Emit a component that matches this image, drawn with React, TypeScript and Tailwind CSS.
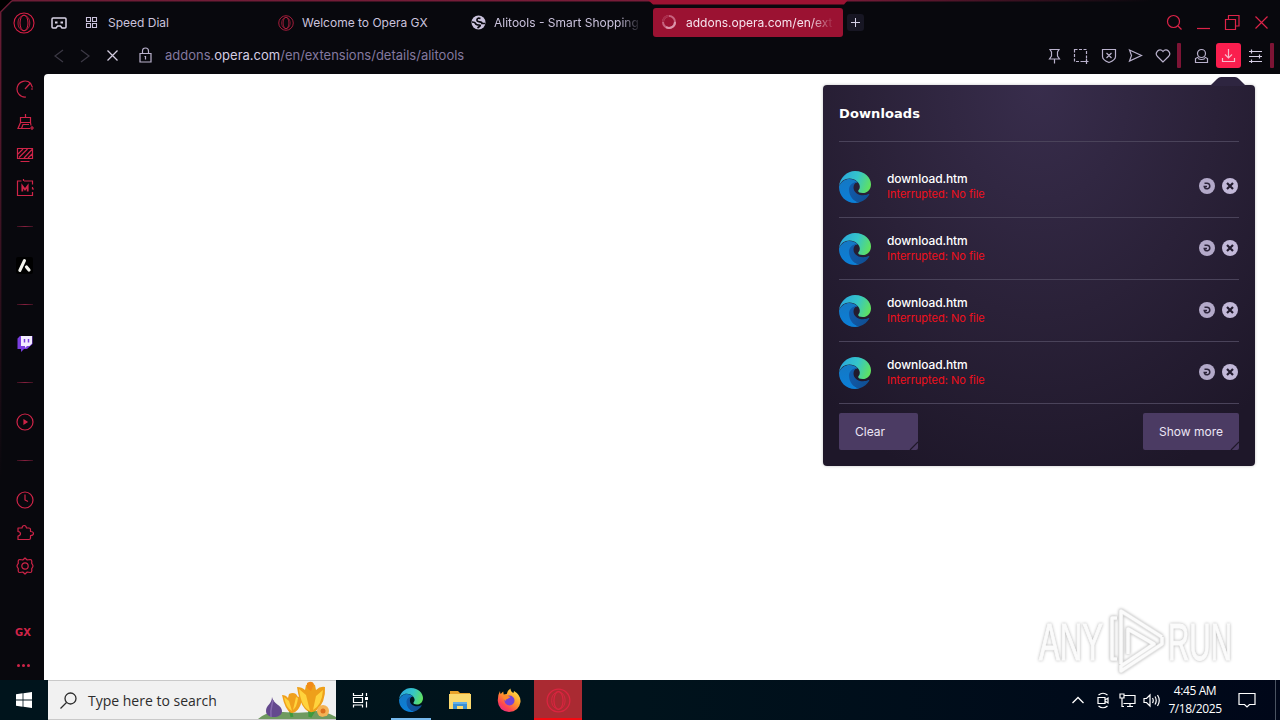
import type { ReactNode } from 'react';

type IconProps = {
  w: number;
  h?: number;
  className?: string;
  sw?: number;
  children: ReactNode;
};

function Icon({ w, h = w, className = '', sw = 1.2, children }: IconProps) {
  return (
    <svg
      width={w}
      height={h}
      viewBox={`0 0 ${w} ${h}`}
      fill="none"
      stroke="currentColor"
      strokeWidth={sw}
      className={`shrink-0 ${className}`}
    >
      {children}
    </svg>
  );
}

function OperaLogo({ size, className = '' }: { size: number; className?: string }) {
  return (
    <svg width={size} height={size} viewBox="0 0 22 22" fill="none" stroke="currentColor" className={`shrink-0 ${className}`}>
      <circle cx="11" cy="11" r="10" strokeWidth="1.1" />
      <ellipse cx="11" cy="11" rx="4" ry="7.8" strokeWidth="1" />
      <path d="M8.500 4.200C10.500 1.700 16.800 4 16.800 11S10.500 20.300 8.500 17.800M8.500 4.200C6 5.500 5 8 5 11s1 5.500 3.500 6.800" strokeWidth=".8" />
    </svg>
  );
}

function EdgeLogo({ size }: { size: number }) {
  const id = `edge${size}`;
  return (
    <svg width={size} height={size} viewBox="0 0 32 32" className="shrink-0">
      <defs>
        <linearGradient id={`${id}a`} x1="2" y1="6" x2="31" y2="17" gradientUnits="userSpaceOnUse">
          <stop offset="0" stopColor="#2aa9dc" />
          <stop offset=".5" stopColor="#35c5c9" />
          <stop offset="1" stopColor="#62e35a" />
        </linearGradient>
        <linearGradient id={`${id}b`} x1="8" y1="8" x2="10" y2="32" gradientUnits="userSpaceOnUse">
          <stop offset="0" stopColor="#1478c4" />
          <stop offset="1" stopColor="#0b7fd8" />
        </linearGradient>
        <linearGradient id={`${id}c`} x1="10" y1="18" x2="30" y2="26" gradientUnits="userSpaceOnUse">
          <stop offset="0" stopColor="#1259a8" />
          <stop offset="1" stopColor="#0f4f93" />
        </linearGradient>
      </defs>
      <path fill={`url(#${id}b)`} d="M0 15.500C2 10.500 6 8 10.500 8c3.500 0 6.500 1.500 8 3.500C13 12 11 15 11 18.500 11 25 15 30 20.500 31.300 19 31.800 17.500 32 16 32 7 32 0 25 0 16Z" />
      <path fill={`url(#${id}c)`} d="M17.500 11C12.500 11.500 10 15 10 18.500c0 7 5 12.500 10.500 12.700 4.500-1.200 8-4.200 9.700-7.400.4-.7-.2-1-.8-.7-1.400.8-3.200 1.200-5.200 1.200-6 0-9.700-3.800-9.700-7.800 0-2.500 1.200-4.500 3.500-5.500Z" />
      <path fill={`url(#${id}a)`} d="M0 15.500C.8 6.500 8 0 16 0c10 0 16 7 16 13.200 0 5.600-4 8.800-8.200 8.800-3.200 0-4.600-1-4.600-2 0-.9 1.600-1.400 1.600-4.200C20.800 12 16.500 7.600 10.500 7.600 5.500 7.600 1.500 10.500 0 15.500Z" />
    </svg>
  );
}

function Tab({ icon, label, className, active = false }: { icon: ReactNode; label: string; className: string; active?: boolean }) {
  return (
    <div className={`flex h-[29px] shrink-0 items-center rounded-[3px] pl-2 ${active ? 'bg-[#9b1232] text-[#f6e4ee]' : 'text-[#cbc3dd]'} ${className}`}>
      {icon}
      <span className="ml-2 flex-1 overflow-hidden whitespace-nowrap pt-px">{label}</span>
    </div>
  );
}

function TopBar() {
  return (
    <div className="flex h-[45px] items-center text-[12px]">
      <OperaLogo size={22} className="ml-[13px] text-[#d81f45]" />
      <Icon w={17} h={14} className="ml-[16px] mr-[9px] text-[#d9d4e6]" sw={1.5}>
        <path d="M2 2h12q1 0 1 1v8q0 1-1 1h-3L9.500 10h-3L5 12H2q-1 0-1-1V3q0-1 1-1z" />
        <path d="M4 6.500h2.500M9.500 6.500H12" strokeWidth="2.200" />
      </Icon>
      <Tab
        className="w-[193px]"
        label="Speed Dial"
        icon={
          <Icon w={13} className="mr-[2px]" sw={1.1}>
            <path d="M1.500 1.500h4v4h-4zM7.500 1.500h4v4h-4zM1.500 7.500h4v4h-4zM7.500 7.500h4v4h-4z" />
          </Icon>
        }
      />
      <Tab className="w-[193px]" label="Welcome to Opera GX" icon={<OperaLogo size={16} className="text-[#c92246]" />} />
      <Tab
        className="mr-[10px] w-[180px] [&>span]:[mask-image:linear-gradient(to_right,black_84%,transparent_99%)]"
        label="Alitools - Smart Shopping"
        icon={
          <svg width="15" height="15" viewBox="0 0 15 15" className="shrink-0">
            <circle cx="7.500" cy="7.500" r="7" fill="#cbc3dd" />
            <path d="M9.500 3.500q-3-1-3.500 1t2.500 2.300 2.500 1.700h3M1 7q3 0 3.500 1.500T8 10t-1.500 3" fill="none" stroke="#08080d" strokeWidth="1.700" />
          </svg>
        }
      />
      <Tab
        active
        className="w-[190px] pr-[10px] [&>span]:[mask-image:linear-gradient(to_right,black_84%,transparent_101%)]"
        label="addons.opera.com/en/ext"
        icon={
          <Icon w={17} sw={2}>
            <circle cx="8" cy="8" r="6" stroke="#c7647f" />
            <path d="M8 2a6 6 0 0 0-6 6" stroke="#a92a49" />
            <path d="M5 13.200A6 6 0 0 0 14 8" stroke="#dc95aa" />
          </Icon>
        }
      />
      <div className="ml-[4px] flex h-[17px] w-[17px] items-center justify-center rounded-[3px] bg-[#171623] text-[#d5d1e6]">
        <Icon w={11} sw={1}>
          <path d="M5.500 1v9M1 5.500h9" />
        </Icon>
      </div>
      <div className="ml-auto flex items-center text-[#dc2348]">
        <Icon w={17}>
          <circle cx="7.500" cy="7.500" r="6" />
          <path d="m12 12 3.500 3.500" />
        </Icon>
        <Icon w={15} h={17} className="ml-[13px]">
          <path d="M1 14.500h13" />
        </Icon>
        <Icon w={17} className="ml-[13px]">
          <path d="M1.500 5.500h10v10h-10zM4.500 5.500v-4h10.500v10.500h-3.500" />
        </Icon>
        <Icon w={15} className="ml-[13px] mr-[11px]">
          <path d="m1.500 1.500 12 12M13.500 1.500l-12 12" />
        </Icon>
      </div>
    </div>
  );
}

function AddressBar() {
  return (
    <div className="mb-2 flex h-[21px] items-center text-[#b9b1cc]">
      <Icon w={11} h={14} className="ml-[53px] text-[#3c3945]">
        <path d="M10 1 2 7l8 6" />
      </Icon>
      <Icon w={11} h={14} className="ml-[16px] text-[#3c3945]">
        <path d="m1 1 8 6-8 6" />
      </Icon>
      <Icon w={13} className="ml-[15px] text-[#d3ccdf]" sw={1.3}>
        <path d="m1.500 1.500 10 10M11.500 1.500l-10 10" />
      </Icon>
      <Icon w={13} h={16} className="ml-[20px] mb-px">
        <path d="M1 6.500h11v8.500H1zM3.500 6.500V4q0-3 3-3t3 3v2.500M5.500 9.500h1v3" />
      </Icon>
      <span className="ml-[13px] whitespace-nowrap pt-px text-[13px] text-[#83799f]">
        addons.<span className="text-[#d4cde3]">opera.com</span>/en/extensions/details/alitools
      </span>

      <div className="ml-auto flex items-center">
        <Icon w={13} h={16}>
          <path d="M2 1.500h9L9.500 4v4l2 3h-10l2-3V4zM6.500 11v4.500" />
        </Icon>
        <Icon w={16} className="ml-[12px]">
          <path d="M1.500 1.500h12v12h-12z" strokeDasharray="3 1.500" />
          <path d="M10 13.500h5.500M13.500 11v5" />
        </Icon>
        <Icon w={16} className="ml-[12px]">
          <path d="M1.500 1.500h13v7q0 3.500-6.500 6-6.500-2.500-6.500-6zM5.500 5l5 5M10.500 5l-5 5" />
        </Icon>
        <Icon w={15} className="ml-[11px]">
          <path d="m1.500 2 12 5.500-12 5.500 2-5.500z" />
        </Icon>
        <Icon w={16} className="ml-[12px]">
          <path d="M8 14 2.500 8.500C-1 5 4.500-1 8 3.500c3.500-4.500 9 1.500 5.500 5z" />
        </Icon>
        <span className="ml-[6px] h-[25px] w-1 rounded-[1px] bg-[#7d1435]" />
        <Icon w={15} h={16} className="ml-[13px]">
          <circle cx="7.500" cy="5.500" r="4" />
          <path d="M4.500 9 1.500 10.500v4h12v-4l-3-1.500M4 10.500q3.500 2 7 0" />
        </Icon>
        <span className="ml-[7px] flex h-[25px] w-[25px] items-center justify-center rounded-[3px] bg-[#fa1e4e] text-[#f7b9ca]">
          <Icon w={15}>
            <path d="M7.500 1v8.500M4 6.500l3.500 3.500L11 6.500M1.500 10v3.500h12V10" />
          </Icon>
        </span>
        <Icon w={15} h={14} className="ml-[7px] text-[#d4cde3]">
          <path d="M1 2.500h13M1 7.500h13M1 12.500h13M3.500.5v4M11.500 5.500v4M3.500 10.500v3.500" />
        </Icon>
        <span className="ml-[7px] mr-[6px] h-[25px] w-1 rounded-[1px] bg-[#7d1435]" />
      </div>
    </div>
  );
}

function Dash() {
  return (
    <div className="flex h-[45px] w-full shrink-0 items-center justify-center">
      <span className="h-[1.5px] w-4 bg-linear-to-r from-[#3d1020] via-[#87203f] to-[#3d1020]" />
    </div>
  );
}

function Slot({ children }: { children: ReactNode }) {
  return <div className="flex h-[33px] w-full shrink-0 items-center justify-center">{children}</div>;
}

function Sidebar() {
  return (
    <div className="-mt-0.5 flex w-11 shrink-0 flex-col items-center pl-[5px] text-[#cf2448]">
      <Slot>
        <Icon w={18}>
          <path d="M10 17A8 8 0 1 1 14.500 3.200M9 9l5-5.500M14.500 3.200l2 4.300M15 9h2" />
        </Icon>
      </Slot>
      <Slot>
        <Icon w={18}>
          <path d="M4.500 4.500h10v5h-10zM9.500 1v3.500M4.500 9.500 2 15.500h12M14.500 9.500l.5 3M5.500 15.500l1.500-4h6M16 13v4M14 15h4" />
        </Icon>
      </Slot>
      <Slot>
        <Icon w={18}>
          <path d="M1.500 2.500h15v10h-15zM4.500 15.500h9M2 8l5-5M3 11.500 11.500 3M8 12l8-8.500M12 12l4-4" />
        </Icon>
      </Slot>
      <Slot>
        <Icon w={18}>
          <path d="M16.500 5.500V2H8M5.500 2h-4v14.500h15V13M16.500 8v2.500M7.500 0v2M16 10h2" />
          <path d="M6.300 12.500V7L9 10.500 11.700 7v5.500" strokeWidth="1.800" />
        </Icon>
      </Slot>
      <Dash />
      <Slot>
        <svg width="17" height="17" viewBox="0 0 17 17">
          <rect width="17" height="17" rx="2" fill="#000" />
          <path d="M8.500 3.500 3.800 13.500" stroke="#f4f4ee" strokeWidth="3" strokeLinecap="round" />
          <path d="M10.500 10l2.500 3" stroke="#f4f4ee" strokeWidth="3.200" strokeLinecap="round" />
        </svg>
      </Slot>
      <Dash />
      <Slot>
        <svg width="16" height="17" viewBox="0 0 16 17">
          <path d="M3 1 .5 3.500V14H4v3l3-3h3l5.500-5V1z" fill="#7a3fe0" />
          <path d="M4 1h11v7.500L12.500 11H10l-2 2v-2H4z" fill="#f3ecff" />
          <path d="M7.500 4v3.500M11.500 4v3.500" stroke="#7a3fe0" strokeWidth="1.500" />
        </svg>
      </Slot>
      <Dash />
      <Slot>
        <Icon w={18}>
          <circle cx="9" cy="9" r="8" />
          <path d="m8 7 3 2-3 2z" fill="currentColor" />
        </Icon>
      </Slot>
      <Dash />
      <Slot>
        <Icon w={18}>
          <circle cx="9" cy="9" r="8" />
          <path d="M9 3.500V9l3 1.500" />
        </Icon>
      </Slot>
      <Slot>
        <Icon w={18}>
          <path
            strokeLinejoin="round"
            d="M2 4h4q.3-2.500 2.200-2.500T10.500 4H13q1.500 0 1.500 1.500V7.500q3 0 3 2t-3 2.200V14q0 1.500-1.500 1.500H2V12q2.500-.5 2.500-2.300T2 7.500z"
          />
        </Icon>
      </Slot>
      <Slot>
        <Icon w={18}>
          <path
            strokeLinejoin="round"
            d="M9 1l2.200 2 3-.5q1.500 0 1.600 1.500l-.1 2.300Q17 8 17 9t-1.300 2.700l.1 2.300q-.1 1.500-1.600 1.500l-3-.5L9 17l-2.200-2-3 .5Q2.300 15.500 2.200 14l.1-2.300Q1 10 1 9t1.300-2.700L2.200 4Q2.300 2.500 3.800 2.500l3 .5z"
          />
          <circle cx="9" cy="9" r="3.200" />
        </Icon>
      </Slot>
      <div className="mt-[34px] w-full shrink-0">
        <Slot>
          <span className="-ml-[3px] font-['DejaVu_Sans'] text-[10px] font-bold">GX</span>
        </Slot>
        <Slot>
          <span className="-ml-[2px] flex gap-[2px]">
            <span className="size-[3px] rounded-full bg-[#cf2448]" />
            <span className="size-[3px] rounded-full bg-[#cf2448]" />
            <span className="size-[3px] rounded-full bg-[#cf2448]" />
          </span>
        </Slot>
      </div>
    </div>
  );
}

function DownloadRow() {
  return (
    <div className="flex h-[62px] items-center border-b border-[#4a435a]">
      <EdgeLogo size={32} />
      <div className="ml-4 flex-1 pb-[1px]">
        <div className="text-[12px] leading-4 font-medium tracking-[-0.1px] text-white">download.htm</div>
        <div className="text-[11px] leading-[15px] text-[#f0101c]">Interrupted: No file</div>
      </div>
      <svg width="16" height="16" viewBox="0 0 16 16" className="mb-[2px] mr-[7px]">
        <circle cx="8" cy="8" r="8" fill="#b3a9c9" />
        <path d="M5.500 5.200H8a2.800 2.800 0 1 1-2.600 3.900M4.500 8.500H8" fill="none" stroke="#2c243a" strokeWidth="1.500" />
      </svg>
      <svg width="16" height="16" viewBox="0 0 16 16" className="mb-[2px] mr-[1px]">
        <circle cx="8" cy="8" r="8" fill="#c2b8d8" />
        <path d="m5 5 6 6M11 5l-6 6" stroke="#221b2e" strokeWidth="2.200" />
      </svg>
    </div>
  );
}

function PanelButton({ label }: { label: string }) {
  return (
    <button className="relative h-[37px] whitespace-nowrap rounded-[2px] bg-[#4b3b63] px-4 pt-px text-left text-[12px] text-[#ece6f5]">
      {label}
      <svg width="9" height="9" viewBox="0 0 9 9" className="absolute bottom-0 right-0">
        <path d="M9 1 1 9" stroke="#1f1829" strokeWidth="1.200" />
      </svg>
    </button>
  );
}

function DownloadsPanel() {
  return (
    <div className="absolute right-[25px] top-[85px] h-[381px] w-[432px] rounded-[4px] bg-[radial-gradient(ellipse_75%_110%_at_50%_0%,#382d4c_0%,#2a2138_55%,#1e1729_100%)] px-4 shadow-[0_0_3px_rgba(0,0,0,0.25)]">
      <svg width="36" height="9" viewBox="0 0 36 9" className="absolute -top-2 right-[9px]">
        <path d="M0 9 7 2q2-2 4-2h14q2 0 4 2l7 7z" fill="#2e2540" />
      </svg>
      <div className="flex h-[57px] items-center border-b border-[#4a435a] pt-[2px]">
        <h2 className="font-['DejaVu_Sans'] text-[13px] font-bold tracking-[0.1px] text-white">Downloads</h2>
      </div>
      <div className="mt-[14px]">
        {[0, 1, 2, 3].map((i) => (
          <DownloadRow key={i} />
        ))}
      </div>
      <div className="mt-[9px] flex justify-between [&>button:first-child]:w-[79px] [&>button:last-child]:w-24">
        <PanelButton label="Clear" />
        <PanelButton label="Show more" />
      </div>
    </div>
  );
}

function Watermark() {
  return (
    <svg width="220" height="70" viewBox="0 0 220 70" className="absolute left-[1030px] top-[606px] [filter:drop-shadow(0_0_1.5px_rgba(0,0,0,0.3))]">
      <g fill="#fbfbfb" stroke="#fbfbfb" strokeWidth="1" fontFamily="Liberation Sans Narrow, Liberation Sans" fontSize="52">
        <text x="9" y="54" textLength="64" lengthAdjust="spacingAndGlyphs">ANY</text>
        <text x="138" y="54" textLength="64" lengthAdjust="spacingAndGlyphs">RUN</text>
      </g>
      <g fill="none" strokeLinejoin="round">
        <path d="M87 12h-5v41h5M91 58V5l41 26M98 48V23l26 15-33 22v5l41-27v-7" stroke="#e4e4e4" strokeWidth="4.500" />
        <path d="M87 12h-5v41h5M91 58V5l41 26M98 48V23l26 15-33 22v5l41-27v-7" stroke="#fbfbfb" strokeWidth="3.200" />
      </g>
    </svg>
  );
}

function SearchArt() {
  return (
    <svg width="78" height="39" viewBox="0 0 78 39" className="ml-auto shrink-0 self-end">
      <path d="M0 39Q10 30 25 32q20 2 33-1 10 0 20 6v2z" fill="#6f9a60" />
      <path d="M52 37 51 20M34 37l-3-12M52 37l7-11" stroke="#3e9a3c" strokeWidth="3" fill="none" />
      <path d="M14 17c1 7 10 8 10 14 0 8-16 8-16 0 0-6 6-7 6-14Z" fill="#64498e" />
      <path d="M15 20c-1 6-3 9-2 17" stroke="#8468ad" strokeWidth="1.500" fill="none" />
      <path d="M24 15q4 0 6 3l1-4q4-2 7 0l2 3 2-1q3 6-1 12-3 5-8 5-6-3-9-18Z" fill="#f0a01c" />
      <path d="m26 17 5 4 3 10q-6-3-8-14ZM38 17l2 1q-1 9-5 12z" fill="#ffd33d" />
      <path d="M39 7q5 0 8 3l1-5q5-3 9 0l1 5q4-4 9-3 1 15-9 24-7 3-11-2-6-7-8-22Z" fill="#eea01a" />
      <path d="m41 9 7 6 4 16q-9-4-11-22ZM65 10l-7 6-3 14q9-5 10-20Z" fill="#ffd33d" />
      <path d="M49 3q5-3 7 1l-3 7-4-3z" fill="#f18b18" />
      <circle cx="65" cy="31" r="6" fill="#f4b255" />
      <circle cx="65" cy="31" r="2.500" fill="#dc701e" />
      <path d="M60 39q8-5 17-2v2z" fill="#6f9a60" />
    </svg>
  );
}

function Taskbar() {
  return (
    <div className="flex h-10 items-center bg-linear-to-r from-[#00141c] via-[#00131c] to-[#000719] font-['Open_Sans','Noto_Sans',sans-serif] text-white">
      <div className="flex w-12 justify-center">
        <svg width="16" height="16" viewBox="0 0 16 16" fill="#fff">
          <path d="M0 2.200 6.600 1.300v6.300H0zM7.400 1.200 16 0v7.600H7.400zM0 8.400h6.600v6.300L0 13.800zM7.400 8.400H16V16l-8.600-1.200z" />
        </svg>
      </div>
      <div className="flex h-10 w-72 items-center border-y border-[#c9c9c9] bg-[#f1f1f1] pl-3 text-[#2c2c2c]">
        <Icon w={17} sw={1.3}>
          <circle cx="10.500" cy="6.500" r="5.500" />
          <path d="M6.500 10.500.5 16.500" />
        </Icon>
        <span className="ml-[11px] whitespace-nowrap text-[14px]">Type here to search</span>
        <SearchArt />
      </div>
      <div className="flex w-12 justify-center">
        <Icon w={17} h={16} sw={1.2}>
          <path d="M1.500 1v2.500h9V1M1.500 15.500V13h9v2.500M1.500 5.500h9v5h-9zM14.500 1v3M14.500 9.500v6" />
          <path d="M13 5h3v3h-3z" fill="currentColor" stroke="none" />
        </Icon>
      </div>
      <div className="relative ml-[3px] flex h-10 w-[48px] items-center justify-center">
        <EdgeLogo size={24} />
        <span className="absolute bottom-0 h-0.5 w-10 bg-[#76b9ed]" />
      </div>
      <div className="flex w-[50px] justify-center">
        <svg width="22" height="19" viewBox="0 0 22 19">
          <path d="M1 0h8l2 2h10v5H1z" fill="#e9a32a" />
          <path d="M0 3h22v15H0z" fill="#fbd96e" />
          <path d="M4 18v-7h14v7h-4v-3H8v3z" fill="#3b8fd2" />
          <path d="M4 11h14v2H4z" fill="#63aee6" />
        </svg>
      </div>
      <div className="flex w-[49px] justify-center pr-[2px]">
        <svg width="24" height="24" viewBox="0 0 24 24">
          <defs>
            <linearGradient id="fox" x1="20" y1="2" x2="5" y2="22" gradientUnits="userSpaceOnUse">
              <stop offset="0" stopColor="#ffe04a" />
              <stop offset=".45" stopColor="#ff9a2b" />
              <stop offset=".8" stopColor="#ff4550" />
              <stop offset="1" stopColor="#e8307f" />
            </linearGradient>
          </defs>
          <path d="M3 3q0 2 .7 3l2.500-2.500.5 3 3-.5Q10 3 13.500.5q0 3 3 4.500L17 3q7 4 6.500 11-1.500 9.500-11.500 10Q1.500 23 .8 13 .6 7 3 3Z" fill="url(#fox)" />
          <circle cx="12.500" cy="12.500" r="5" fill="#7542d8" />
          <path d="M5 8q4-2 6 0l2.500 1-3 2q-2 0-2 2-2-2-3.500-5Z" fill="#ff8a2a" />
        </svg>
      </div>
      <div className="flex h-10 w-12 items-center justify-center border-b-2 border-[#f40a12] bg-[#aa2a32]">
        <OperaLogo size={25} className="mt-[2px] text-[#dc2440]" />
      </div>

      {/* System tray */}
      <div className="ml-auto flex h-10 items-center">
        <Icon w={12} h={8} sw={1.3}>
          <path d="m.5 7 5.500-5.500L11.500 7" />
        </Icon>
        <Icon w={12} h={17} className="ml-[13px]">
          <path d="M1 5.500h7v6H1zM8 8l3-2v5L8 9M1.500 3q4.500-3.500 9 0M1.500 14q4.500 3.500 9 0" />
        </Icon>
        <Icon w={17} h={15} className="ml-[10px]">
          <path d="M5 2.500h11v8H4.500M8 13.500h6M11 10.500v3M1 1h4v4H1zM3 5v8.500h2" />
        </Icon>
        <Icon w={18} h={15} className="ml-[7px]">
          <path d="M1 5.500h2.500L7 2v11L3.500 9.500H1zM9.500 5q1.500 2.500 0 5M12 3.500q2.500 4 0 8M14.500 2q3.500 5.500 0 11" />
        </Icon>
        <div className="ml-[3px] w-[62px] whitespace-nowrap pb-px text-center text-[12px] leading-[18px] tracking-[-0.4px]">
          <div>4:45 AM</div>
          <div>7/18/2025</div>
        </div>
        <Icon w={18} h={17} className="ml-[12px]">
          <path d="M1 1.500h16v11h-5.500L9 15l-2.500-2.500H1z" />
        </Icon>
        <span className="ml-[19px] mr-[4px] h-10 w-px bg-[#4a5361]" />
      </div>
    </div>
  );
}

export default function App() {
  return (
    <div className="relative flex h-[720px] w-[1280px] flex-col overflow-hidden bg-[#08080d] font-['Inter',sans-serif]">
      <TopBar />
      <AddressBar />
      <div className="flex h-[606px]">
        <Sidebar />
        <div className="flex-1 rounded-tl-[4px] bg-white" />
      </div>
      <Taskbar />

      {/* Window edge glow */}
      <svg width="1280" height="680" viewBox="0 0 1280 680" className="pointer-events-none absolute left-0 top-0" fill="none">
        <defs>
          <linearGradient id="edgeTop" x1="0" y1="0" x2="1280" y2="0" gradientUnits="userSpaceOnUse">
            <stop offset="0" stopColor="#6d1d36" />
            <stop offset=".65" stopColor="#7d1c3a" />
            <stop offset=".9" stopColor="#08080d" />
          </linearGradient>
          <linearGradient id="edgeLeft" x1="0" y1="0" x2="0" y2="480" gradientUnits="userSpaceOnUse">
            <stop offset="0" stopColor="#6d1d36" />
            <stop offset="1" stopColor="#08080d" />
          </linearGradient>
        </defs>
        <path d="M0 0h12L0 12z" fill="#000" />
        <path d="M12 .7h1268" stroke="url(#edgeTop)" strokeWidth="1.400" />
        <path d="M.7 480V12L12 .7" stroke="url(#edgeLeft)" strokeWidth="1.400" />
        <path d="M648 0h200l-4 4.500H653z" fill="#9b1232" />
      </svg>

      <DownloadsPanel />
      <Watermark />
    </div>
  );
}
